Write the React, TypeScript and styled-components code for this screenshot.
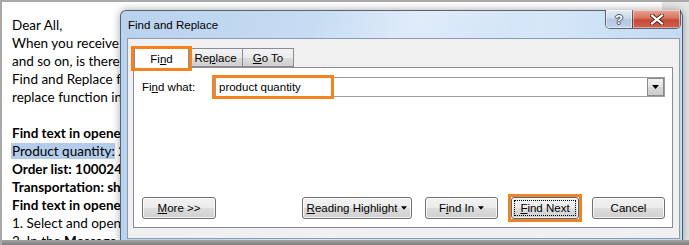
import React from "react";
import styled, { createGlobalStyle } from "styled-components";

const GlobalStyle = createGlobalStyle`
  html, body {
    margin: 0;
    padding: 0;
    background: #ffffff;
  }
`;

const Frame = styled.div`
  position: relative;
  width: 689px;
  height: 245px;
  box-sizing: border-box;
  overflow: hidden;
  border-top: 2px solid #a9a9a9;
  border-left: 2px solid #a9a9a9;
  background: #e6e6e6;

  &::after {
    content: "";
    position: absolute;
    left: 0;
    right: 0;
    bottom: 0;
    height: 5px;
    background: linear-gradient(#a4a4a4, #7c7c7c);
    z-index: 5;
  }
`;

const Document = styled.div`
  width: 660px;
  height: 100%;
  box-sizing: border-box;
  padding: 14px 0 0 10px;
  background: #ffffff;
  font-family: Lato, "Liberation Sans", sans-serif;
  font-size: 13.5px;
  line-height: 18px;
  color: #000;
  white-space: nowrap;
  overflow: hidden;
`;

const Line = styled.div<{ $bold?: boolean }>`
  height: 18px;
  font-weight: ${(p) => (p.$bold ? 700 : 400)};
`;

const Marked = styled.span`
  background: #b4cceb;
  margin-left: -1px;
  padding-left: 1px;
`;

const Dialog = styled.div`
  position: absolute;
  left: 118px;
  top: 8px;
  width: 563px;
  height: 233px;
  box-sizing: border-box;
  display: flex;
  flex-direction: column;
  padding: 0 2px 3px 6px;
  border: 1px solid rgba(45, 58, 78, 0.75);
  border-radius: 6px 6px 0 0;
  background:
    linear-gradient(115deg, rgba(255, 255, 255, 0) 30%, rgba(255, 255, 255, 0.35) 45%, rgba(255, 255, 255, 0) 60%),
    linear-gradient(to right, #b9d2ed, #cfe2f7 55%, #d6e7f8 75%, #c3daf2);
  box-shadow: 0 0 8px rgba(0, 0, 0, 0.35);
  font-family: "Segoe UI", "Liberation Sans", Arial, sans-serif;
  font-size: 11.5px;
  color: #000;
`;

const TitleBar = styled.div`
  height: 27px;
  display: flex;
  align-items: flex-start;
`;

const Title = styled.div`
  padding: 8px 0 0 1px;
  font-size: 11.5px;
  flex: 1;
`;

const CaptionGroup = styled.div`
  display: flex;
  margin-right: -1px;
  margin-top: -1px;
  border: 1px solid rgba(40, 50, 70, 0.7);
  border-top: none;
  border-radius: 0 0 5px 5px;
  overflow: hidden;
`;

const CaptionButton = styled.div<{ $close?: boolean }>`
  width: ${(p) => (p.$close ? "47px" : "26px")};
  height: 18px;
  display: flex;
  align-items: center;
  justify-content: center;
  border-left: ${(p) => (p.$close ? "1px solid rgba(40,50,70,0.6)" : "none")};
  background: ${(p) =>
    p.$close
      ? "linear-gradient(#e8a595 0%, #d9735f 45%, #c44a36 55%, #d0604c 100%)"
      : "linear-gradient(#e3ecf6 0%, #cbdaea 45%, #b3c6dc 55%, #c3d4e6 100%)"};
  box-shadow: inset 0 0 0 1px rgba(255, 255, 255, 0.45);
`;

const HelpGlyph = styled.span`
  font-family: "Liberation Sans", Arial, sans-serif;
  font-weight: 700;
  font-size: 13px;
  line-height: 1;
  color: #ffffff;
  text-shadow: 0 0 1px #39475a, 1px 0 0 #4a5a70, -1px 0 0 #4a5a70, 0 1px 0 #4a5a70, 0 -1px 0 #4a5a70;
`;

const Client = styled.div`
  flex: 1;
  background: #f0f0f0;
  border: 1px solid #8c9cb0;
  padding: 8px 6px 0 5px;
  display: flex;
  flex-direction: column;
`;

const TabRow = styled.div`
  display: flex;
  align-items: flex-end;
  padding-left: 1px;
  position: relative;
  z-index: 2;
`;

const Tab = styled.div<{ $active?: boolean; $w: number }>`
  position: relative;
  width: ${(p) => p.$w}px;
  box-sizing: border-box;
  height: ${(p) => (p.$active ? "21px" : "19px")};
  margin-left: ${(p) => (p.$active ? "0" : "-1px")};
  margin-bottom: ${(p) => (p.$active ? "-1px" : "0")};
  border: 1px solid #898c95;
  border-bottom: ${(p) => (p.$active ? "none" : "1px solid #898c95")};
  background: ${(p) =>
    p.$active ? "#ffffff" : "linear-gradient(#f3f3f3 0%, #ebebeb 50%, #dddddd 51%, #cfcfcf 100%)"};
  display: flex;
  align-items: center;
  justify-content: center;
  padding-top: ${(p) => (p.$active ? "1px" : "0")};

  &:first-child {
    margin-left: 0;
  }
`;

const Callout = styled.div`
  position: absolute;
  border: 3px solid #f5821f;
  pointer-events: none;
  z-index: 3;
`;

const TabCallout = styled(Callout)`
  left: -4px;
  right: -4px;
  top: -2px;
  bottom: -3px;
`;

const Key = styled.span`
  text-decoration: underline;
  text-underline-offset: 1px;
`;

const Panel = styled.div`
  height: 161px;
  box-sizing: border-box;
  background: #ffffff;
  border: 1px solid #898c95;
  padding: 9px 7px 8px 8px;
  display: flex;
  flex-direction: column;
  justify-content: space-between;
`;

const FieldRow = styled.div`
  display: flex;
  align-items: center;
`;

const Label = styled.div`
  width: 73px;
`;

const Combo = styled.div`
  position: relative;
  flex: 1;
  height: 20px;
  box-sizing: border-box;
  border: 1px solid #9c9ea5;
  display: flex;
  align-items: center;
  justify-content: space-between;
  padding-left: 3px;
`;

const ComboCallout = styled(Callout)`
  left: -4px;
  top: -3px;
  width: 116px;
  height: 18px;
`;

const DropButton = styled.div`
  width: 17px;
  height: 18px;
  box-sizing: border-box;
  border: 1px solid #8a8a8a;
  background: linear-gradient(#f2f2f2 0%, #e6e6e6 50%, #d8d8d8 51%, #cdcdcd 100%);
  display: flex;
  align-items: center;
  justify-content: center;
`;

const ButtonRow = styled.div`
  display: flex;
  align-items: center;
  gap: 13px;
`;

const Button = styled.div<{ $w: number; $focus?: boolean }>`
  position: relative;
  width: ${(p) => p.$w}px;
  height: 22px;
  box-sizing: border-box;
  border: 1px solid ${(p) => (p.$focus ? "#3c6fa0" : "#707070")};
  border-radius: 3px;
  background: linear-gradient(#f2f2f2 0%, #ebebeb 50%, #dddddd 51%, #cfcfcf 100%);
  box-shadow: inset 0 0 0 1px rgba(255, 255, 255, 0.75);
  display: flex;
  align-items: center;
  justify-content: center;
  gap: 4px;

  &:first-child {
    margin-right: auto;
  }
`;

const FocusRect = styled.div`
  position: absolute;
  inset: 2px;
  border: 1px dotted #000;
  pointer-events: none;
`;

const ButtonCallout = styled(Callout)`
  inset: -4px;
`;

const Arrow = ({ size = 7 }: { size?: number }) => (
  <svg width={size} height={4} viewBox="0 0 7 4">
    <path d="M0 0 H7 L3.5 4 Z" fill="#000" />
  </svg>
);

const CloseGlyph = () => (
  <svg width="14" height="11" viewBox="0 0 14 11">
    <path
      d="M2 1.5 L12 9.5 M12 1.5 L2 9.5"
      stroke="#4a2a24"
      strokeWidth="4"
      strokeLinecap="square"
    />
    <path
      d="M2 1.5 L12 9.5 M12 1.5 L2 9.5"
      stroke="#ffffff"
      strokeWidth="2.2"
      strokeLinecap="square"
    />
  </svg>
);

const docLines: { text: React.ReactNode; bold?: boolean }[] = [
  { text: "Dear All," },
  { text: "When you receive the email with order list, product quantity, transportation" },
  { text: "and so on, is there a quick way to find the specific text in the opened email? The" },
  { text: "Find and Replace feature in Outlook can help you. Besides, you can also use the" },
  { text: "replace function in the email to replace the text quickly." },
  { text: "\u00a0" },
  { text: "Find text in opened email:", bold: true },
  {
    text: (
      <>
        <Marked>Product quantity:</Marked> <b>200</b>
      </>
    ),
  },
  { text: "Order list: 10002478", bold: true },
  { text: "Transportation: ship", bold: true },
  { text: "Find text in opened email:", bold: true },
  { text: "1. Select and open the email you want to find text in." },
  {
    text: (
      <>
        2. In the <b>Message</b> tab, click Find in the Editing group.
      </>
    ),
  },
];

export default function App() {
  return (
    <>
      <GlobalStyle />
      <Frame>
        <Document>
          {docLines.map((l, i) => (
            <Line key={i} $bold={l.bold}>
              {l.text}
            </Line>
          ))}
        </Document>

        <Dialog>
          <TitleBar>
            <Title>Find and Replace</Title>
            <CaptionGroup>
              <CaptionButton>
                <HelpGlyph>?</HelpGlyph>
              </CaptionButton>
              <CaptionButton $close>
                <CloseGlyph />
              </CaptionButton>
            </CaptionGroup>
          </TitleBar>

          <Client>
            <TabRow>
              <Tab $active $w={55}>
                Fi<Key>n</Key>d
                <TabCallout />
              </Tab>
              <Tab $w={55}>
                Re<Key>p</Key>lace
              </Tab>
              <Tab $w={52}>
                <Key>G</Key>o To
              </Tab>
            </TabRow>

            <Panel>
              <FieldRow>
                <Label>
                  Fi<Key>n</Key>d what:
                </Label>
                <Combo>
                  <span>product quantity</span>
                  <DropButton>
                    <Arrow />
                  </DropButton>
                  <ComboCallout />
                </Combo>
              </FieldRow>

              <ButtonRow>
                <Button $w={74}>
                  <span>
                    <Key>M</Key>ore &gt;&gt;
                  </span>
                </Button>
                <Button $w={110}>
                  <span>
                    <Key>R</Key>eading Highlight
                  </span>
                  <Arrow size={6} />
                </Button>
                <Button $w={73}>
                  <span>
                    F<Key>i</Key>nd In
                  </span>
                  <Arrow size={6} />
                </Button>
                <Button $w={68} $focus>
                  <span>
                    <Key>F</Key>ind Next
                  </span>
                  <FocusRect />
                  <ButtonCallout />
                </Button>
                <Button $w={73}>Cancel</Button>
              </ButtonRow>
            </Panel>
          </Client>
        </Dialog>
      </Frame>
    </>
  );
}
